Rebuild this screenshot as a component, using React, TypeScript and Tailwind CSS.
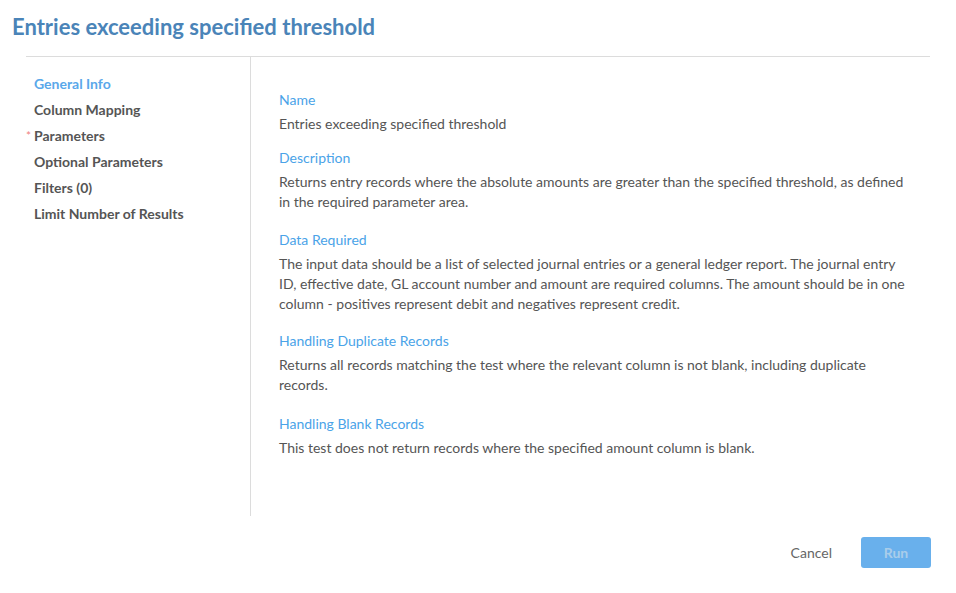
import React from "react";

const navItems = [
  { label: "General Info", active: true },
  { label: "Column Mapping" },
  { label: "Parameters", required: true },
  { label: "Optional Parameters" },
  { label: "Filters (0)" },
  { label: "Limit Number of Results" },
];

function Section({
  title,
  children,
  className = "",
}: {
  title: string;
  children: React.ReactNode;
  className?: string;
}) {
  return (
    <div className={className}>
      <div className="text-[14px] leading-5 text-[#4aa3e8]">{title}</div>
      <p className="mt-1 text-[14px] leading-5 text-[#555]">{children}</p>
    </div>
  );
}

export default function App() {
  return (
    <div
      className="w-full h-[593px] bg-white flex flex-col"
      style={{ fontFamily: "Lato, 'Open Sans', sans-serif" }}
    >
      {/* Header */}
      <div className="px-3 pt-[13px] h-[56px]">
        <h1 className="text-[22px] leading-7 font-bold text-[#4a84b8]">
          Entries exceeding specified threshold
        </h1>
      </div>
      <div className="mx-[26px] border-t border-[#dcdcdc]" />

      {/* Body */}
      <div className="flex mx-[26px] h-[459px]">
        <nav className="w-[225px] border-r border-[#dcdcdc] pt-[14px] pl-2">
          {navItems.map((item) => (
            <div
              key={item.label}
              className={`relative text-[14px] leading-[26px] font-bold ${
                item.active ? "text-[#5aa8ea]" : "text-[#555]"
              }`}
            >
              {item.required && (
                <span className="absolute -left-[8px] top-[0px] text-[12px] text-[#f08080] font-normal">
                  *
                </span>
              )}
              {item.label}
            </div>
          ))}
        </nav>

        <div className="flex-1 pl-7 pt-[33px] pr-6">
          <div className="max-w-[642px]">
            <Section title="Name">Entries exceeding specified threshold</Section>
            <Section title="Description" className="mt-[14px]">
              Returns entry records where the absolute amounts are greater than the specified
              threshold, as defined in the required parameter area.
            </Section>
            <Section title="Data Required" className="mt-[18px]">
              The input data should be a list of selected journal entries or a general ledger
              report. The journal entry ID, effective date, GL account number and amount are
              required columns. The amount should be in one column - positives represent debit
              and negatives represent credit.
            </Section>
            <Section title="Handling Duplicate Records" className="mt-[17px]">
              Returns all records matching the test where the relevant column is not blank,
              including duplicate records.
            </Section>
            <Section title="Handling Blank Records" className="mt-[19px]">
              This test does not return records where the specified amount column is blank.
            </Section>
          </div>
        </div>
      </div>

      {/* Footer */}
      <div className="flex items-center justify-end gap-[21px] pr-[25px] pt-[21px]">
        <button className="text-[14px] text-[#666] px-2">Cancel</button>
        <button className="w-[70px] h-[31px] rounded-[3px] bg-[#69b0ec] text-[14px] font-bold text-[#a9cdea]">
          Run
        </button>
      </div>
    </div>
  );
}
